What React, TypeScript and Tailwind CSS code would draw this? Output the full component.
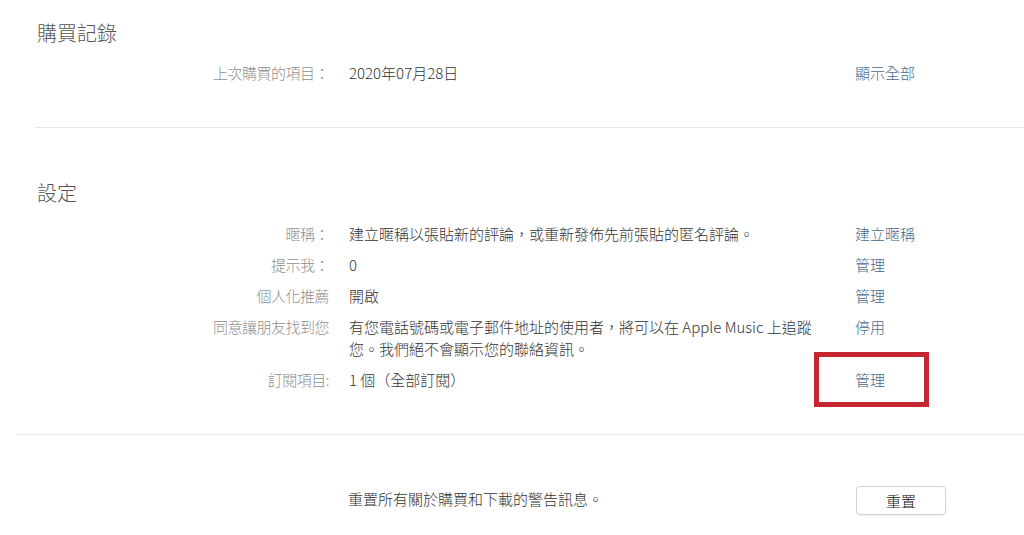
const font = { fontFamily: '"Noto Sans CJK TC", "Noto Sans", sans-serif' };

type Row = { label: string; value: string; action?: string; boxed?: boolean };

const rows: Row[] = [
  { label: "暱稱：", value: "建立暱稱以張貼新的評論，或重新發佈先前張貼的匿名評論。", action: "建立暱稱" },
  { label: "提示我：", value: "0", action: "管理" },
  { label: "個人化推薦", value: "開啟", action: "管理" },
  {
    label: "同意讓朋友找到您",
    value: "有您電話號碼或電子郵件地址的使用者，將可以在 Apple Music 上追蹤您。我們絕不會顯示您的聯絡資訊。",
    action: "停用",
  },
  { label: "訂閱項目:", value: "1 個（全部訂閱）", action: "管理", boxed: true },
];

function InfoRow({ label, value, action, boxed }: Row) {
  return (
    <div className="flex items-start text-[15px] leading-[22px] font-light">
      <div className="w-[294px] shrink-0 text-right text-[#8f8f8f] tracking-[-0.5px]">{label}</div>
      <div className="ml-[20px] w-[488px] shrink-0 text-[#333]">{value}</div>
      {action && (
        <div className="ml-[18px] relative text-[#46698c]">
          {action}
          {boxed && (
            <div className="absolute left-[-41px] top-[-17px] w-[115px] h-[55px] border-[5px] border-[#c6262f]" />
          )}
        </div>
      )}
    </div>
  );
}

export default function App() {
  return (
    <div className="w-[1024px] h-[535px] bg-white overflow-hidden" style={font}>
      <div className="ml-[35px] pt-[19px]">
        <h2 className="text-[20px] leading-[28px] text-[#555] font-light pl-[2px]">購買記錄</h2>
        <div className="mt-[15px]">
          <InfoRow label="上次購買的項目：" value="2020年07月28日" action="顯示全部" />
        </div>
        <div className="mt-[43px] border-t border-[#e8e8e8]" />

        <h2 className="mt-[51px] text-[20px] leading-[28px] text-[#555] font-light pl-[2px]">設定</h2>
        <div className="mt-[16px] flex flex-col gap-[9px]">
          {rows.map((r) => (
            <InfoRow key={r.label} {...r} />
          ))}
        </div>
      </div>

      <div className="ml-[17px] mt-[43px] border-t border-[#e8e8e8]" />

      <div className="ml-[35px] mt-[51px] flex items-center text-[15px] leading-[22px] font-light">
        <div className="w-[294px] shrink-0" />
        <div className="ml-[19px] w-[508px] shrink-0 text-[#333] -mt-[4px]">重置所有關於購買和下載的警告訊息。</div>
        <button className="w-[90px] h-[29px] rounded-[4px] border border-[#d2d2d2] bg-white text-[#111] text-[15px] font-light shadow-[0_1px_1px_rgba(0,0,0,0.06)]">
          重置
        </button>
      </div>
    </div>
  );
}
